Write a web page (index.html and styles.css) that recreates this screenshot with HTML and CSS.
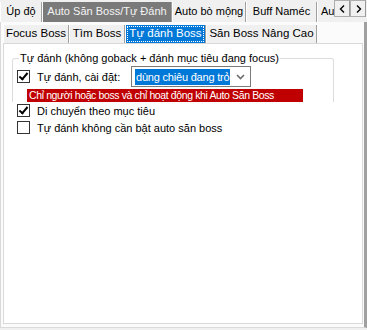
FILE: index.html
```html
<!DOCTYPE html>
<html lang="vi">
<head>
    <meta charset="UTF-8">
    <title>Auto Săn Boss</title>
    <link rel="stylesheet" href="styles.css">
</head>
<body>
    <div class="tabs">
        <div class="tab tab-up">Úp độ</div>
        <div class="tab tab-boss active">Auto Săn Boss/Tự Đánh</div>
        <div class="tab tab-bo">Auto bò mộng</div>
        <div class="tab tab-buff">Buff Naméc</div>
        <div class="tab tab-cut">Au</div>
        <div class="arrows">
            <span class="arrow">
                <svg width="7" height="8" viewBox="0 0 7 8"><path d="M5 0.5 L1.5 4 L5 7.5" fill="none" stroke="#000" stroke-width="1.4"/></svg>
            </span>
            <span class="arrow">
                <svg width="7" height="8" viewBox="0 0 7 8"><path d="M2 0.5 L5.5 4 L2 7.5" fill="none" stroke="#000" stroke-width="1.4"/></svg>
            </span>
        </div>
    </div>
    <div class="page">
        <div class="subtabs">
            <div class="subtab sub-focus">Focus Boss</div>
            <div class="subtab sub-tim">Tìm Boss</div>
            <div class="subtab sub-tu active"><span>Tự đánh Boss</span></div>
            <div class="subtab sub-san">Săn Boss Nâng Cao</div>
        </div>
        <div class="panel">
            <fieldset class="group">
                <legend>Tự đánh (không goback + đánh mục tiêu đang focus)</legend>
                <div class="row">
                    <label class="check first"><span class="box checked"></span>Tự đánh, cài đặt:</label>
                    <div class="select">
                        <span class="value">dùng chiêu đang trỏ</span>
                        <svg class="caret" width="9" height="6" viewBox="0 0 9 6">
                            <path d="M1 1 L4.5 4.5 L8 1" fill="none" stroke="#6d6d6d" stroke-width="1.6"/>
                        </svg>
                    </div>
                </div>
                <div class="warning">Chỉ người hoặc boss và chỉ hoạt động khi Auto Săn Boss</div>
            </fieldset>
            <label class="check"><span class="box checked"></span>Di chuyển theo mục tiêu</label>
            <label class="check"><span class="box"></span>Tự đánh không cần bật auto săn boss</label>
        </div>
    </div>
</body>
</html>
```

FILE: styles.css
```css
body {
    margin: 0;
    width: 367px;
    height: 330px;
    overflow: hidden;
    background-color: #f0f0f0;
    font-family: "Liberation Sans", Arial, sans-serif;
    font-size: 11px;
    color: #000;
}

.tabs {
    display: flex;
    height: 22px;
    overflow: hidden;
}

.tab {
    height: 17px;
    margin-top: 2px;
    padding-top: 3px;
    border-left: 1px solid #fff;
    border-right: 1px solid #a0a0a0;
    white-space: nowrap;
    text-align: center;
    background-color: #f0f0f0;
}

.tab-up { width: 40px; }
.tab-boss { width: 128px; }
.tab-bo { width: 72px; }
.tab-buff { width: 69px; }

.tab-cut {
    width: 13px;
    overflow: hidden;
    text-align: left;
    padding-left: 3px;
    border-right: none;
}

.tab.active {
    background-color: #7a7a7a;
    color: #f4f4f4;
}

.arrows {
    display: flex;
    height: 16px;
}

.arrow {
    width: 14px;
    height: 15px;
    border: 1px solid #adadad;
    border-right-color: #999;
    background-color: #f0f0f0;
    display: flex;
    align-items: center;
    justify-content: center;
}

.page {
    height: 306px;
    border-left: 1px solid #dadada;
    border-right: 3px solid #a0a0a0;
    border-bottom: 1px solid #dadada;
    padding: 3px 0 0 2px;
    box-sizing: border-box;
    background-color: #fbfbfb;
}

.subtabs {
    display: flex;
    height: 18px;
}

.subtab {
    height: 16px;
    padding-top: 2px;
    border-left: 1px solid #fff;
    border-right: 1px solid #a0a0a0;
    white-space: nowrap;
    text-align: center;
    background-color: #f0f0f0;
    font-size: 11.5px;
}

.sub-focus { width: 64px; }
.sub-tim { width: 54px; }
.sub-tu { width: 77px; }
.sub-san { width: 109px; }

.subtab.active {
    background-color: #0078d7;
    color: #fff;
    padding: 1px 1px 0;
    height: 17px;
}

.subtab.active span {
    display: block;
    height: 14px;
    border: 1px dotted #fff;
}

.panel {
    height: 281px;
    margin-right: 1px;
    border: 1px solid #d9d9d9;
    background-color: #fff;
    padding: 8px 0 0 8px;
    box-sizing: border-box;
}

.group {
    width: 322px;
    margin: 0;
    padding: 1px 0 0 4px;
    box-sizing: border-box;
    border: 1px solid #dcdcdc;
    border-bottom: none;
    border-radius: 3px 3px 0 0;
}

.group legend {
    padding: 0 1px;
    margin-left: 2px;
}

.row {
    display: flex;
    align-items: center;
    height: 23px;
}

.check {
    display: flex;
    align-items: center;
    height: 17px;
    padding-left: 5px;
}

.check.first {
    width: 114px;
    padding-left: 0;
}

.box {
    width: 11px;
    height: 11px;
    border: 1px solid #333;
    background-color: #fff;
    margin-right: 7px;
    position: relative;
}

.box.checked::after {
    content: "";
    position: absolute;
    left: 3px;
    top: 0;
    width: 3px;
    height: 7px;
    border: solid #000;
    border-width: 0 2px 2px 0;
    transform: rotate(40deg);
}

.select {
    width: 120px;
    height: 21px;
    border: 1px solid #7a7a7a;
    background-color: #fff;
    display: flex;
    align-items: center;
    padding-left: 3px;
    box-sizing: border-box;
}

.value {
    background-color: #0078d7;
    color: #fff;
    padding: 2px 1px;
    white-space: nowrap;
    letter-spacing: -0.2px;
}

.caret {
    margin-left: auto;
    margin-right: 5px;
}

.warning {
    margin: 1px 0 0 10px;
    width: 276px;
    background-color: #c00000;
    color: #fff;
    padding-left: 2px;
    height: 13px;
    line-height: 13px;
    white-space: nowrap;
    overflow: hidden;
    box-sizing: border-box;
    font-size: 10.5px;
    letter-spacing: -0.38px;
}
```
